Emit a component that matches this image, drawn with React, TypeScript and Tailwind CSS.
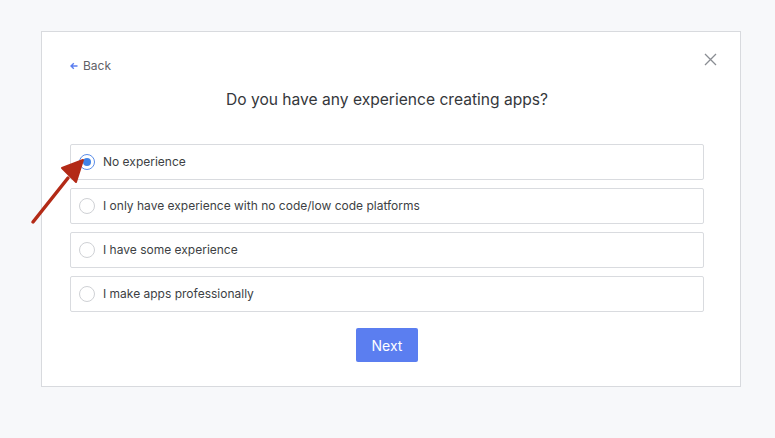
import { useState } from "react"

const options = [
  "No experience",
  "I only have experience with no code/low code platforms",
  "I have some experience",
  "I make apps professionally",
]

export default function App() {
  const [selected, setSelected] = useState(0)

  return (
    <div className="relative w-[775px] h-[438px] bg-[#f7f8fa] pt-[31px] pl-[41px] font-['Inter',sans-serif] text-[#3d3f44]">
      <div className="relative w-[700px] h-[356px] bg-white border border-[#d8dade] pl-[28px] pr-[36px] pt-[26px]">
        <button className="absolute right-[23px] top-[21px] text-[#8a8d93]">
          <svg width="13" height="13" viewBox="0 0 13 13" fill="none" stroke="currentColor" strokeWidth="1.3">
            <path d="M1 1 L12 12 M12 1 L1 12" />
          </svg>
        </button>

        <button className="flex items-center gap-[5px] h-[16px] text-[12px] text-[#5f6167]">
          <svg width="8" height="8" viewBox="0 0 8 8" fill="none" stroke="#5b7ef0" strokeWidth="1.4">
            <path d="M7.5 4 H1 M3.8 1.2 L1 4 L3.8 6.8" />
          </svg>
          Back
        </button>

        <h1 className="mt-[15px] text-center text-[15.6px] leading-[22px] text-[#35373b]">
          Do you have any experience creating apps?
        </h1>

        <div className="mt-[33px] flex flex-col gap-[8px]">
          {options.map((label, i) => (
            <label
              key={label}
              onClick={() => setSelected(i)}
              className="flex items-center h-[36px] border border-[#d9dbdf] rounded-[2px] pl-[8px] text-[12px] text-[#3d3f44] cursor-pointer"
            >
              <span
                className={
                  i === selected
                    ? "flex items-center justify-center w-[16px] h-[16px] rounded-full border border-[#5b8de8] mr-[8px]"
                    : "flex items-center justify-center w-[16px] h-[16px] rounded-full border border-[#cfd1d5] mr-[8px]"
                }
              >
                {i === selected && <span className="w-[8px] h-[8px] rounded-full bg-[#3f82e6]" />}
              </span>
              {label}
            </label>
          ))}
        </div>

        <div className="mt-[16px] flex justify-center">
          <button className="w-[62px] h-[34px] rounded-[2px] bg-[#5b7ef0] text-white text-[14px]">Next</button>
        </div>
      </div>

      <svg className="absolute left-0 top-0 pointer-events-none" width="775" height="438" viewBox="0 0 775 438">
        <path d="M33 222 L68 178" stroke="#b32a16" strokeWidth="3.5" strokeLinecap="round" />
        <path d="M83 160 L62 168 L76 182 Z" fill="#b32a16" stroke="#b32a16" strokeWidth="2" strokeLinejoin="round" />
      </svg>
    </div>
  )
}
